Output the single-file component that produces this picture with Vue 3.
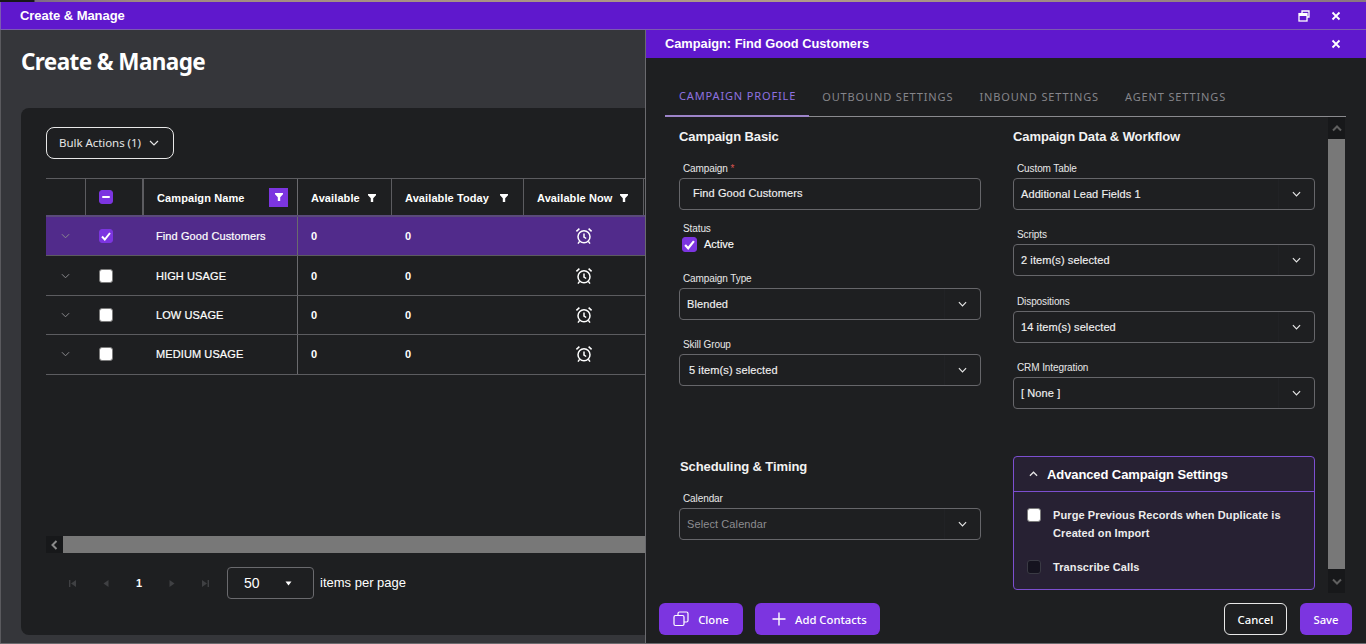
<template>
  <div class="window">
    <div class="desktop-strip"></div>
    <header class="titlebar">
      <span class="titlebar__text">Create &amp; Manage</span>
      <div class="titlebar__actions">
        <svg width="12" height="12" viewBox="0 0 12 12" fill="none" stroke="#fff" stroke-width="1.3"><path d="M4 3V1h7v6H9" /><rect x="1" y="3.6" width="8" height="7.4" /><path d="M1 5h8" stroke-width="2" /></svg>
        <svg class="close" width="10" height="10" viewBox="0 0 10 10" stroke="#fff" stroke-width="1.8"><path d="M1.5 1.5l7 7M8.5 1.5l-7 7" /></svg>
      </div>
    </header>

    <div class="body">
      <main class="page">
        <h1 class="page__title">Create &amp; Manage</h1>
        <section class="card">
          <button class="bulk">
            <span class="bulk__text">Bulk Actions (1)</span>
            <svg width="10" height="6" viewBox="0 0 10 6" fill="none" stroke="#e6e6e6" stroke-width="1.2"><path d="M1 1l4 4 4-4" /></svg>
          </button>

          <div class="table">
            <div class="row row--head">
              <div class="cell cell--expand"></div>
              <div class="cell cell--check cell--head-check"><span class="box box--purple box--minus"></span></div>
              <div class="cell cell--name">
                <span>Campaign Name</span>
                <span class="filter-on"><svg width="8" height="8" viewBox="0 0 8 8" fill="#fff"><path d="M0 0h8v1.300L5.200 4.200V8H2.800V4.200L0 1.300z" /></svg></span>
              </div>
              <div class="cell cell--a">Available <svg class="funnel" width="8" height="8" viewBox="0 0 8 8" fill="#fff"><path d="M0 0h8v1.300L5.200 4.200V8H2.800V4.200L0 1.300z" /></svg></div>
              <div class="cell cell--b">Available Today <svg class="funnel" width="8" height="8" viewBox="0 0 8 8" fill="#fff"><path d="M0 0h8v1.300L5.200 4.200V8H2.800V4.200L0 1.300z" /></svg></div>
              <div class="cell cell--c">Available Now <svg class="funnel" width="8" height="8" viewBox="0 0 8 8" fill="#fff"><path d="M0 0h8v1.300L5.200 4.200V8H2.800V4.200L0 1.300z" /></svg></div>
            </div>

            <div v-for="(r, i) in rows" :key="r" class="row" :class="{ 'row--selected': i === 0 }">
              <div class="cell cell--expand">
                <svg width="9" height="6" viewBox="0 0 10 6" fill="none" stroke="#8b8b8f" stroke-width="1.1"><path d="M1 1l4 4 4-4" /></svg>
              </div>
              <div class="cell cell--check">
                <span v-if="i === 0" class="box box--purple">
                  <svg width="10" height="9" viewBox="0 0 10 9" fill="none" stroke="#fff" stroke-width="2"><path d="M1 4.5l2.8 3L9 1" /></svg>
                </span>
                <span v-else class="box"></span>
              </div>
              <div class="cell cell--name cell--name-body">{{ r }}</div>
              <div class="cell cell--a cell--num">0</div>
              <div class="cell cell--b cell--num">0</div>
              <div class="cell cell--c cell--alarm">
                <svg width="18" height="18" viewBox="0 0 18 18" fill="none" stroke="#fff" stroke-width="1.5"><circle cx="9" cy="9.800" r="6" /><path d="M9 6.400V10l2.200 1.500M1.400 4.400L4.400 1.600M16.600 4.400l-3-2.800M4.600 14.400L3 16.600M13.400 14.400l1.600 2.200" /></svg>
              </div>
            </div>
          </div>

          <div class="hscroll">
            <span class="hscroll__btn"><svg width="7" height="10" viewBox="0 0 7 10" fill="none" stroke="#8a8a8a" stroke-width="2"><path d="M5.500 1L1.500 5l4 4" /></svg></span>
            <span class="hscroll__thumb"></span>
          </div>

          <div class="pager">
            <div class="pager__nav">
              <svg width="7" height="7" viewBox="0 0 7 7" fill="#3f4043"><path d="M0 0h1.400v7H0zM7 0v7L2 3.500z" /></svg>
              <svg width="6" height="7" viewBox="0 0 6 7" fill="#3f4043"><path d="M5.500 0v7L0.500 3.500z" /></svg>
              <span class="pager__num">1</span>
              <svg width="6" height="7" viewBox="0 0 6 7" fill="#3f4043"><path d="M0.500 0v7l5-3.500z" /></svg>
              <svg width="7" height="7" viewBox="0 0 7 7" fill="#3f4043"><path d="M0 0v7l5-3.500zM5.600 0H7v7H5.600z" /></svg>
            </div>
            <div class="pager__select">
              <span>50</span>
              <svg width="7" height="5" viewBox="0 0 7 5" fill="#fff"><path d="M0.500 0.500h6L3.500 4.500z" /></svg>
            </div>
            <span class="pager__label">items per page</span>
          </div>
        </section>
      </main>

      <aside class="panel">
        <header class="panel__head">
          <span class="panel__title">Campaign: Find Good Customers</span>
          <svg width="10" height="10" viewBox="0 0 10 10" stroke="#fff" stroke-width="1.8"><path d="M1.500 1.500l7 7M8.500 1.500l-7 7" /></svg>
        </header>

        <nav class="tabs">
          <span v-for="(t, i) in tabs" :key="t" class="tab" :class="{ 'tab--active': i === 0 }">{{ t }}</span>
        </nav>

        <div class="panel__scroll">
          <div class="form">
            <div class="col">
              <h3 class="section">Campaign Basic</h3>
              <div class="field field--first">
                <label class="lbl">Campaign <em>*</em></label>
                <div class="input input--text">Find Good Customers</div>
              </div>
              <div class="field field--status">
                <label class="lbl">Status</label>
                <div class="check-line">
                  <span class="box box--purple box--big">
                    <svg width="11" height="10" viewBox="0 0 10 9" fill="none" stroke="#fff" stroke-width="2"><path d="M1 4.500l2.800 3L9 1" /></svg>
                  </span>
                  <span class="check-line__text">Active</span>
                </div>
              </div>
              <div class="field field--type">
                <label class="lbl">Campaign Type</label>
                <div class="input">Blended<span class="drop"><svg width="9" height="6" viewBox="0 0 10 6" fill="none" stroke="#e6e6e6" stroke-width="1.3"><path d="M1 1l4 4 4-4" /></svg></span></div>
              </div>
              <div class="field field--skill">
                <label class="lbl">Skill Group</label>
                <div class="input input--multi">5 item(s) selected<span class="drop"><svg width="9" height="6" viewBox="0 0 10 6" fill="none" stroke="#e6e6e6" stroke-width="1.3"><path d="M1 1l4 4 4-4" /></svg></span></div>
              </div>
              <h3 class="section section--sched">Scheduling &amp; Timing</h3>
              <div class="field field--cal">
                <label class="lbl">Calendar</label>
                <div class="input input--ph">Select Calendar<span class="drop"><svg width="9" height="6" viewBox="0 0 10 6" fill="none" stroke="#e6e6e6" stroke-width="1.3"><path d="M1 1l4 4 4-4" /></svg></span></div>
              </div>
            </div>

            <div class="col">
              <h3 class="section">Campaign Data &amp; Workflow</h3>
              <div v-for="f in rightFields" :key="f.label" class="field field--right">
                <label class="lbl">{{ f.label }}</label>
                <div class="input">{{ f.value }}<span class="drop"><svg width="9" height="6" viewBox="0 0 10 6" fill="none" stroke="#e6e6e6" stroke-width="1.3"><path d="M1 1l4 4 4-4" /></svg></span></div>
              </div>

              <div class="advanced">
                <div class="advanced__head">
                  <svg width="9" height="6" viewBox="0 0 10 6" fill="none" stroke="#e6e6e6" stroke-width="1.400"><path d="M1 5l4-4 4 4" /></svg>
                  <span>Advanced Campaign Settings</span>
                </div>
                <div class="advanced__body">
                  <div class="adv-line">
                    <span class="box"></span>
                    <span>Purge Previous Records when Duplicate is Created on Import</span>
                  </div>
                  <div class="adv-line adv-line--second">
                    <span class="box box--dark"></span>
                    <span>Transcribe Calls</span>
                  </div>
                </div>
              </div>
            </div>
          </div>

          <div class="vscroll">
            <span class="vscroll__btn"><svg width="10" height="7" viewBox="0 0 10 7" fill="none" stroke="#5f5f5f" stroke-width="2"><path d="M1 5.500l4-4 4 4" /></svg></span>
            <span class="vscroll__thumb"></span>
            <span class="vscroll__btn vscroll__btn--down"><svg width="10" height="7" viewBox="0 0 10 7" fill="none" stroke="#5f5f5f" stroke-width="2"><path d="M1 1.500l4 4 4-4" /></svg></span>
          </div>
        </div>

        <footer class="panel__foot">
          <button class="btn btn--primary btn--clone">
            <svg width="16" height="16" viewBox="0 0 16 16" fill="none" stroke="#fff" stroke-width="1.200"><rect x="1" y="4.500" width="10" height="10" rx="1.500" /><path d="M5 4.500V2.500A1.500 1.500 0 0 1 6.500 1h7A1.500 1.500 0 0 1 15 2.500v7a1.500 1.500 0 0 1-1.500 1.500H11" /></svg>
            Clone
          </button>
          <button class="btn btn--primary btn--add">
            <svg width="14" height="14" viewBox="0 0 14 14" stroke="#fff" stroke-width="1.400"><path d="M7 0.500v13M0.500 7h13" /></svg>
            Add Contacts
          </button>
          <span class="spacer"></span>
          <button class="btn btn--cancel">Cancel</button>
          <button class="btn btn--primary btn--save">Save</button>
        </footer>
      </aside>
    </div>
  </div>
</template>

<script setup>
const rows = ['Find Good Customers', 'HIGH USAGE', 'LOW USAGE', 'MEDIUM USAGE']
const tabs = ['CAMPAIGN PROFILE', 'OUTBOUND SETTINGS', 'INBOUND SETTINGS', 'AGENT SETTINGS']
const rightFields = [
  { label: 'Custom Table', value: 'Additional Lead Fields 1' },
  { label: 'Scripts', value: '2 item(s) selected' },
  { label: 'Dispositions', value: '14 item(s) selected' },
  { label: 'CRM Integration', value: '[ None ]' },
]
</script>

<style>
html, body {
  margin: 0;
  background: #35363a;
  overflow: hidden;
}
</style>

<style scoped>
* {
  box-sizing: border-box;
}

.window {
  width: 1366px;
  height: 644px;
  display: flex;
  flex-direction: column;
  font-family: "Liberation Sans", Arial, sans-serif;
  color: #fff;
  background: #35363a;
  border-bottom: 1px solid #6a6a6e;
  overflow: hidden;
}

.desktop-strip {
  height: 2px;
  flex: none;
  background: linear-gradient(90deg, #17171a 0, #17171a 34px, #7d6a86 35px, #a08a80 140px, #b09a88 800px, #8a7680 1366px);
}

.titlebar {
  height: 28px;
  flex: none;
  display: flex;
  align-items: center;
  justify-content: space-between;
  padding: 0 25px 0 19px;
  background: #5f18cd;
  border-bottom: 1px solid #7c5bb0;
  border-left: 1px solid #7c5bb0;
  font-size: 13px;
  font-weight: 700;
  letter-spacing: -0.05px;
}

.titlebar__actions {
  display: flex;
  align-items: center;
  gap: 21px;
}

.body {
  flex: 1;
  display: flex;
  min-height: 0;
}

.page {
  width: 645px;
  flex: none;
  padding: 0 0 8px 20px;
  display: flex;
  flex-direction: column;
  border-left: 1px solid #5a5a5e;
}

.page__title {
  margin: 0;
  padding-top: 16px;
  height: 78px;
  font-family: "Noto Sans", sans-serif;
  font-size: 22.500px;
  line-height: 32px;
  letter-spacing: -0.6px;
  font-weight: 700;
}

.card {
  flex: 1;
  background: #1e1f21;
  border-radius: 8px 0 0 8px;
  padding: 19px 0 0 25px;
  display: flex;
  flex-direction: column;
}

.bulk {
  width: 128px;
  height: 32px;
  background: transparent;
  border: 1px solid #e8e8e8;
  border-radius: 8px;
  color: #e6e6e6;
  font-family: "Noto Sans", sans-serif;
  font-size: 11.500px;
  letter-spacing: -0.05px;
  display: flex;
  align-items: center;
  gap: 8px;
  padding: 0 0 0 12px;
}

.bulk__text {
  padding-bottom: 2px;
}

.table {
  margin-top: 19px;
  border-top: 1px solid #5c5c60;
}

.row {
  display: flex;
  height: 39.400px;
  border-bottom: 1px solid #5c5c60;
  font-size: 11px;
  font-weight: 700;
  letter-spacing: 0.1px;
}

.row--head {
  height: 38px;
  border-bottom: 2px solid #5a4a7a;
}

.row--selected {
  background: #512b8b;
}

.cell {
  display: flex;
  align-items: center;
  height: 100%;
  flex: none;
}

.row--head .cell {
  padding-top: 2px;
  justify-content: space-between;
}

.cell--expand {
  width: 39px;
  padding-right: 1px;
  justify-content: center;
}

.cell--check {
  width: 59px;
  padding-left: 14px;
}

.cell--head-check {
  border-left: 1px solid #5c5c60;
  border-right: 2px solid #5c5c60;
}

.row--head .cell--check {
  padding-top: 0;
  padding-left: 13px;
}

.cell--name {
  width: 154px;
  border-right: 1px solid #6a6a6e;
}

.row--head .cell--name {
  padding-top: 0;
  padding-left: 13px;
  padding-right: 9px;
}

.row--head .cell--name > span:first-child {
  padding-top: 2px;
}

.cell--name-body {
  padding-left: 12px;
  font-weight: 400;
  -webkit-text-stroke: 0.2px #fff;
}

.filter-on {
  width: 19px;
  height: 19px;
  background: #7c35e0;
  display: flex;
  align-items: center;
  justify-content: center;
}

.cell--a {
  width: 94px;
  padding-left: 13px;
}

.cell--b {
  width: 132px;
  padding-left: 13px;
}

.cell--c {
  width: 120px;
  padding-left: 13px;
}

.row--head .cell--a,
.row--head .cell--b,
.row--head .cell--c {
  padding-right: 15px;
  border-right: 1px solid #5c5c60;
}

.row .cell--alarm {
  justify-content: center;
  padding: 0 1px 0 0;
}

.box {
  width: 14px;
  height: 14px;
  border-radius: 3px;
  background: #fff;
  border: 1px solid #7d7d7d;
  display: inline-flex;
  align-items: center;
  justify-content: center;
  flex: none;
}

.box--purple {
  background: #7c35e0;
  border-color: #7c35e0;
}

.box--minus::before {
  content: "";
  width: 8px;
  height: 2px;
  background: #fff;
  border-radius: 1px;
}

.box--big {
  width: 15px;
  height: 15px;
}

.box--dark {
  background: #15131f;
  border-color: #3a3a44;
}

.hscroll {
  margin-top: auto;
  height: 17px;
  display: flex;
  flex: none;
}

.hscroll__btn {
  width: 17px;
  height: 17px;
  background: #17181a;
  display: flex;
  align-items: center;
  justify-content: center;
}

.hscroll__thumb {
  flex: 1;
  background: #787878;
}

.pager {
  height: 82px;
  padding-top: 14px;
  display: flex;
  align-items: flex-start;
  flex: none;
}

.pager__nav {
  width: 181px;
  height: 32px;
  padding: 0 18px 0 23px;
  display: flex;
  align-items: center;
  justify-content: space-between;
}

.pager__num {
  font-size: 11px;
  font-weight: 700;
}

.pager__select {
  width: 87px;
  height: 32px;
  border: 1px solid #6a6a6e;
  border-radius: 4px;
  padding: 0 21px 0 16px;
  display: flex;
  align-items: center;
  justify-content: space-between;
  font-size: 14px;
}

.pager__label {
  margin-left: 6px;
  line-height: 32px;
  font-size: 13px;
}

.panel {
  flex: none;
  width: 721px;
  background: #1e1f21;
  border-left: 1px solid #6a6a6e;
  display: flex;
  flex-direction: column;
}

.panel__head {
  height: 28px;
  flex: none;
  background: #5f18cd;
  display: flex;
  align-items: center;
  justify-content: space-between;
  padding: 0 25px 0 19px;
  font-size: 12.800px;
  font-weight: 700;
}

.panel__title {
  padding-bottom: 2px;
}

.tabs {
  margin: 25px 0 0 19px;
  width: 681px;
  height: 34px;
  flex: none;
  display: flex;
  align-items: flex-start;
  border-bottom: 1px solid #8a8a8e;
  font-family: "Noto Sans", sans-serif;
  font-size: 11px;
  letter-spacing: 0.86px;
  color: #85858a;
}

.tab {
  padding: 6px 13px 0;
  height: 34px;
  white-space: nowrap;
}

.tab--active {
  padding: 5px 13px 0 14px;
  color: #8f72e0;
  border-bottom: 2px solid #9d84c9;
}

.panel__scroll {
  flex: 1;
  min-height: 0;
  display: flex;
  padding-left: 19px;
}

.form {
  width: 662px;
  margin-right: 1px;
  display: flex;
  padding-left: 14px;
  gap: 32px;
}

.col {
  width: 302px;
  flex: none;
  display: flex;
  flex-direction: column;
}

.section {
  margin: 11px 0 0;
  height: 17px;
  font-size: 13px;
  line-height: 17px;
  letter-spacing: -0.1px;
  font-weight: 700;
  color: #f2f2f2;
}

.section--sched {
  margin: 72px 0 0 1px;
}

.lbl {
  display: block;
  margin-left: 4px;
  height: 13px;
  font-size: 10px;
  line-height: 13px;
  letter-spacing: -0.1px;
  color: #e8e8e8;
}

.lbl em {
  color: #d9534f;
  font-style: normal;
}

.input {
  margin-top: 3px;
  height: 32px;
  border: 1px solid #66666a;
  border-radius: 4px;
  display: flex;
  align-items: center;
  justify-content: space-between;
  padding-left: 7px;
  font-size: 11px;
  letter-spacing: 0.1px;
  color: #f0f0f0;
  -webkit-text-stroke: 0.15px #f0f0f0;
}

.input--text {
  padding-left: 13px;
  padding-bottom: 2px;
}

.input--multi {
  padding-left: 9px;
}

.input--ph {
  color: #8d8d90;
  -webkit-text-stroke: 0;
}

.drop {
  width: 36px;
  height: 100%;
  display: flex;
  align-items: center;
  justify-content: center;
  border-left: 1px solid #212225;
}

.field--first {
  margin-top: 17px;
}

.field--status {
  margin-top: 12px;
}

.check-line {
  display: flex;
  align-items: center;
  gap: 7px;
  margin: 2px 0 0 3px;
  font-size: 11px;
  -webkit-text-stroke: 0.15px #f0f0f0;
}

.check-line__text {
  padding-bottom: 2px;
}

.field--type {
  margin-top: 20px;
}

.field--skill {
  margin-top: 18px;
}

.field--cal {
  margin-top: 17px;
}

.field--right {
  margin-top: 18px;
}

.field--right:nth-of-type(1) {
  margin-top: 17px;
}

.field--right:nth-of-type(3) {
  margin-top: 19px;
}

.advanced {
  margin-top: 47px;
  height: 134px;
  border: 1px solid #7c4fd0;
  border-radius: 4px;
  background: #272133;
}

.advanced__head {
  height: 35px;
  display: flex;
  align-items: center;
  gap: 9px;
  padding-left: 15px;
  border-bottom: 1px solid #7c4fd0;
  font-size: 13px;
  letter-spacing: -0.1px;
  font-weight: 700;
}

.advanced__body {
  padding: 14px 13px 0;
  font-size: 11px;
  font-weight: 700;
  letter-spacing: 0.1px;
  line-height: 18px;
  color: #ececec;
}

.adv-line {
  display: flex;
  gap: 12px;
}

.adv-line .box {
  margin-top: 2px;
}

.adv-line--second {
  margin-top: 16px;
  align-items: center;
}

.adv-line--second .box {
  margin-top: 0;
}

.vscroll {
  width: 17px;
  display: flex;
  flex-direction: column;
  height: 476px;
}

.vscroll__btn {
  height: 22px;
  flex: none;
  background: #17181a;
  display: flex;
  align-items: center;
  justify-content: center;
}

.vscroll__btn--down {
  height: 24px;
}

.vscroll__thumb {
  flex: 1;
  background: #787878;
}

.panel__foot {
  height: 50px;
  flex: none;
  display: flex;
  align-items: flex-start;
  padding: 10px 14px 0 13px;
  gap: 12px;
}

.spacer {
  flex: 1;
}

.btn {
  height: 32px;
  border-radius: 6px;
  border: none;
  font-family: "Noto Sans", sans-serif;
  font-size: 11.300px;
  font-weight: 500;
  color: #fff;
  display: flex;
  align-items: center;
  justify-content: center;
  padding: 0;
}

.btn--primary {
  background: #7c35e0;
}

.btn--clone {
  width: 84px;
  gap: 9px;
}

.btn--add {
  width: 125px;
  gap: 9px;
  justify-content: flex-start;
  padding-left: 17px;
}

.btn--cancel {
  width: 63px;
  background: transparent;
  border: 1px solid #e8e8e8;
  margin-right: 1px;
}

.btn--save {
  width: 52px;
}
</style>
